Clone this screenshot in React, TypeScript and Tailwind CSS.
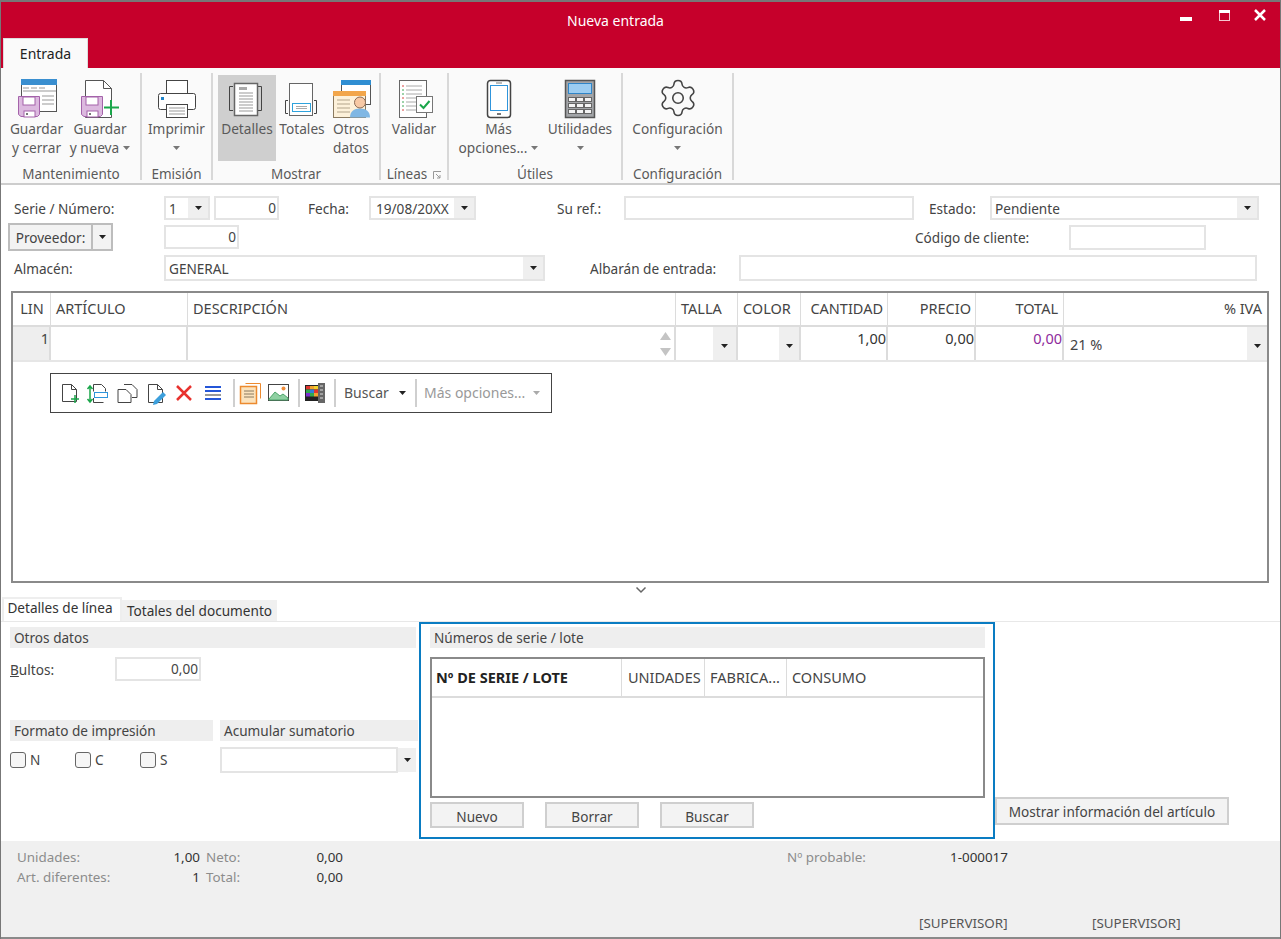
import { Settings } from "lucide-react";

const Caret = ({ color = "#222" }: { color?: string }) => (
  <svg width="7" height="4" viewBox="0 0 7 4" className="shrink-0">
    <path d="M0 0h7L3.5 4z" fill={color} />
  </svg>
);

const Floppy = ({ x, y }: { x: number; y: number }) => (
  <g transform={`translate(${x} ${y})`}>
    <path d="M.5.5h21v18l-2 2H3l-2.500-2z" fill="#dcb9df" stroke="#a463aa" />
    <rect x="5" y="1" width="12" height="8" fill="#fff" stroke="#a463aa" />
    <rect x="6" y="15" width="11" height="6" fill="#fff" stroke="#a463aa" />
    <rect x="8" y="17" width="2" height="2" fill="#777" />
  </g>
);

const IconGuardarCerrar = () => (
  <svg width="44" height="44" viewBox="0 0 44 44">
    <rect x="6.500" y="3.500" width="35" height="32" fill="#fff" stroke="#555" />
    <rect x="6" y="3" width="36" height="6" fill="#3a8fd0" />
    <path d="M8 12h6M16 12h6M24 12h6M8 15h33M27 20h12M27 24h12M27 28h12" stroke="#999" />
    <Floppy x={3} y={20} />
  </svg>
);

const IconGuardarNueva = () => (
  <svg width="44" height="44" viewBox="0 0 44 44">
    <path d="M7.500 4.500h18l8 8v29h-26z" fill="#fff" stroke="#555" />
    <path d="M25.500 4.500v8h8" fill="none" stroke="#555" />
    <Floppy x={3} y={20} />
    <path d="M33 24v15M26 31.500h15" stroke="#1aa64a" strokeWidth="2" />
  </svg>
);

const IconImprimir = () => (
  <svg width="44" height="44" viewBox="0 0 44 44">
    <rect x="11.500" y="4.500" width="21" height="14" fill="#fff" stroke="#444" />
    <rect x="3.500" y="17.500" width="37" height="16" rx="2" fill="#fff" stroke="#444" />
    <rect x="6" y="21" width="3" height="3" fill="#1f83c9" />
    <rect x="11.500" y="28.500" width="21" height="13" fill="#fff" stroke="#444" />
    <path d="M14 32h16M14 35h16M14 38h16" stroke="#999" />
  </svg>
);

const IconDetalles = () => (
  <svg width="44" height="44" viewBox="0 0 44 44">
    <path d="M8 10.500H4.500v24H8M33 10.500h3.500v24H33" fill="none" stroke="#444" />
    <rect x="9.500" y="7.500" width="23" height="32" fill="#fff" stroke="#666" strokeWidth="1.500" />
    <rect x="14" y="11" width="8" height="3" fill="#aaa" />
    <path d="M14 17h14M14 20h14M14 23h14M14 26h14M14 29h14M14 32h14M14 35h14" stroke="#999" />
  </svg>
);

const IconTotales = () => (
  <svg width="44" height="44" viewBox="0 0 44 44">
    <rect x="9.500" y="7.500" width="23" height="32" fill="#fff" stroke="#666" />
    <path d="M8 24.500H5.500v13H8M34 24.500h2.500v13H34" fill="none" stroke="#444" />
    <rect x="12.500" y="27.500" width="18" height="8" fill="#fff" stroke="#2ea3dd" />
    <path d="M16 30.500h11M16 32.500h11" stroke="#aaa" />
  </svg>
);

const IconOtros = () => (
  <svg width="44" height="44" viewBox="0 0 44 44">
    <rect x="12.500" y="4.500" width="29" height="24" fill="#fff" stroke="#555" />
    <rect x="12" y="4" width="30" height="5" fill="#2f8ed2" />
    <rect x="4.500" y="15.500" width="32" height="26" fill="#fdf1da" stroke="#8a7a60" />
    <rect x="4" y="15" width="33" height="5" fill="#f2a64b" />
    <path d="M8 24h13M8 28h13M8 32h13M8 36h13" stroke="#b3a58c" />
    <path d="M21 41.500c0-6 4-9 10-9s10 3 10 9z" fill="#7fb7e4" />
    <circle cx="31" cy="26.500" r="5.500" fill="#f8c9a5" stroke="#8a6a55" />
  </svg>
);

const IconValidar = () => (
  <svg width="44" height="44" viewBox="0 0 44 44">
    <rect x="7.500" y="4.500" width="27" height="37" fill="#fff" stroke="#666" />
    <path d="M14 10h16M14 14h16M14 18h16M14 22h16M14 26h10M14 30h10M14 34h10" stroke="#aaa" />
    <path d="M10 10h2M10 22h2M10 34h2" stroke="#d8433f" />
    <path d="M10 14h2M10 18h2M10 26h2M10 30h2" stroke="#3aa655" />
    <rect x="24.500" y="20.500" width="16" height="16" fill="#fff" stroke="#777" />
    <path d="M28 28.500l3.500 3.500 6-7" fill="none" stroke="#1aa64a" strokeWidth="2" />
  </svg>
);

const IconMovil = () => (
  <svg width="44" height="44" viewBox="0 0 44 44">
    <rect x="10.500" y="4.500" width="23" height="37" rx="3" fill="#fff" stroke="#444" strokeWidth="1.500" />
    <rect x="13.500" y="9.500" width="17" height="25" fill="#fff" stroke="#2f95dc" />
    <path d="M19 7h6" stroke="#777" />
    <rect x="20" y="37" width="4" height="2" fill="#777" />
  </svg>
);

const IconCalc = () => (
  <svg width="44" height="44" viewBox="0 0 44 44">
    <rect x="7.500" y="4.500" width="29" height="37" fill="#a3a5a8" stroke="#555" strokeWidth="1.500" />
    <rect x="10.500" y="7.500" width="23" height="10" fill="#9bcdf2" stroke="#2f85c8" />
    {[21, 27, 33].map((y) =>
      [10.5, 18.5, 26.5].map((x) => (
        <rect key={`${x}-${y}`} x={x} y={y + 0.5} width="7" height="4" fill="#f4f4f4" stroke="#666" />
      )),
    )}
  </svg>
);

const RibbonBtn = ({
  icon,
  lines,
  w,
  caret,
  active,
}: {
  icon: React.ReactNode;
  lines: string[];
  w: string;
  caret?: "inline" | "below";
  active?: boolean;
}) => (
  <div className={`flex flex-col items-center h-[86px] shrink-0 ${w} ${active ? "bg-[#cfcfcf]" : ""}`}>
    <div className="h-[44px] mt-[1px] mb-[-1px] flex items-center justify-center">{icon}</div>
    <div className="h-[19px] leading-[19px] whitespace-nowrap">{lines[0]}</div>
    <div className="h-[19px] leading-[19px] whitespace-nowrap flex items-center gap-[4px]">
      {lines[1]}
      {caret && <Caret color="#777" />}
    </div>
  </div>
);

const RibbonGroup = ({
  w,
  label,
  children,
  dialog,
  pad,
}: {
  w: string;
  label: string;
  children: React.ReactNode;
  dialog?: boolean;
  pad?: string;
}) => (
  <div className={`shrink-0 h-[107px] mt-[5px] flex flex-col border-r-2 border-[#d8d8d8] ${w}`}>
    <div className={`flex mt-[2px] h-[86px] text-[13.700px] ${pad ?? "justify-center"}`}>{children}</div>
    <div className={`mt-[5px] h-[17px] leading-[17px] text-center relative text-[13.500px] ${dialog ? "pr-[14px]" : ""}`}>
      {label}
      {dialog && (
        <svg width="9" height="9" viewBox="0 0 9 9" className="absolute right-[5px] top-[5px]">
          <path d="M.5 8V.5H8M3 3l4 4M7 4v3H4" fill="none" stroke="#999" />
        </svg>
      )}
    </div>
  </div>
);

const Field = ({ w, h = "h-[24px]", right, children }: { w: string; h?: string; right?: boolean; children?: React.ReactNode }) => (
  <div className={`shrink-0 bg-white border-2 border-[#e4e4e4] pl-[3px] pr-[1px] flex items-center ${w} ${h} ${right ? "justify-end" : ""}`}>
    {children}
  </div>
);

const Select = ({ w, h = "h-[24px]", arrow = "w-[20px]", children }: { w: string; h?: string; arrow?: string; children?: React.ReactNode }) => (
  <div className={`shrink-0 bg-white border-2 border-[#e4e4e4] flex items-stretch ${w} ${h}`}>
    <div className="flex-1 px-[3px] pt-[2px] flex items-center whitespace-nowrap overflow-hidden">{children}</div>
    <div className={`bg-[#efefef] flex items-center justify-center ${arrow}`}>
      <Caret />
    </div>
  </div>
);

const Label = ({ w, children }: { w: string; children: React.ReactNode }) => (
  <div className={`shrink-0 whitespace-nowrap pt-[2px] ${w}`}>{children}</div>
);

const SectionBar = ({ w, pad = "pl-[4px]", children }: { w: string; pad?: string; children: React.ReactNode }) => (
  <div className={`h-[21px] leading-[21px] bg-[#eeeeee] whitespace-nowrap ${pad} ${w}`}>{children}</div>
);

const Check = ({ label, w }: { label: string; w: string }) => (
  <div className={`flex items-center gap-[4px] ${w}`}>
    <div className="w-[16px] h-[16px] rounded-[3px] border border-[#666] bg-[#f6f6f6]" />
    {label}
  </div>
);

const PushBtn = ({ w, h = "h-[26px]", pt = "pt-[4px]", children }: { w: string; h?: string; pt?: string; children: React.ReactNode }) => (
  <div className={`shrink-0 flex items-center justify-center bg-[#f3f3f3] border-2 border-[#cfcfcf] whitespace-nowrap ${pt} ${w} ${h}`}>
    {children}
  </div>
);

const ToolSep = () => <div className="w-[2px] h-[28px] bg-[#cfcfcf] shrink-0" />;

const Toolbar = () => (
  <div className="absolute left-[37px] top-[80px] w-[502px] h-[40px] bg-white border border-[#444] flex items-center whitespace-nowrap text-[14px]">
    <svg width="168" height="24" viewBox="0 0 168 24" className="ml-[8px] shrink-0">
      {/* nuevo */}
      <path d="M3.500 3.500h9l5 5v12h-14z" fill="#fff" stroke="#444" />
      <path d="M12.500 3.500v5h5" fill="none" stroke="#444" />
      <path d="M16 14v8M12 18h8" stroke="#1aa64a" strokeWidth="1.500" />
      {/* insertar */}
      <path d="M34.500 3.500h8l4 4v3M34.500 3.500v7M34.500 17v4.500h10" fill="none" stroke="#444" />
      <path d="M31 6v14M28.500 8L31 5l2.500 3M28.500 18L31 21l2.500-3" fill="none" stroke="#1aa64a" strokeWidth="1.500" />
      <rect x="35.500" y="11.500" width="13" height="5" fill="#fff" stroke="#2f95dc" />
      {/* duplicar */}
      <path d="M65 3.500h8l5 5v8h-5" fill="#fff" stroke="#444" />
      <path d="M59 8.500h8l5 5v8H59z" fill="#fff" stroke="#444" />
      {/* editar */}
      <path d="M89.500 3.500h9l5 5v13h-14z" fill="#fff" stroke="#444" />
      <path d="M98.500 3.500v5h5" fill="none" stroke="#444" />
      <path d="M95 20l9-9 3 3-9 9-4 1z" fill="#3c9fdc" />
      {/* borrar */}
      <path d="M118 5l14 14M132 5l-14 14" stroke="#e8322e" strokeWidth="2.500" />
      {/* lista */}
      <path d="M146 6h16M146 18h16" stroke="#2456d8" strokeWidth="2" />
      <path d="M146 10h16" stroke="#2456d8" strokeWidth="2" />
      <path d="M146 14h16" stroke="#999" strokeWidth="2" />
    </svg>
    <div className="ml-[6px]"><ToolSep /></div>
    <svg width="59" height="24" viewBox="0 0 59 24" className="ml-[4px] shrink-0">
      <path d="M6.500 2.500h15v15" fill="none" stroke="#ec8a2f" />
      <rect x="1.500" y="5.500" width="16" height="17" fill="#fbe3bd" stroke="#ec8a2f" strokeWidth="1.500" />
      <path d="M5 10h10M5 13h10M5 16h10" stroke="#8a7a60" />
      <rect x="29.500" y="3.500" width="20" height="16" fill="#fff" stroke="#444" />
      <path d="M30 18l6-7 5 4 3-2 5 4v2H30z" fill="#8fd0a2" stroke="#4da56a" />
      <circle cx="44.500" cy="7.500" r="2" fill="#ef8d3a" />
    </svg>
    <ToolSep />
    <svg width="24" height="24" viewBox="0 0 24 24" className="ml-[4px] shrink-0">
      <rect x="1" y="4" width="13" height="16" fill="#222" />
      <rect x="2" y="5" width="4" height="3.500" fill="#e0352f" />
      <rect x="6" y="5" width="4" height="3.500" fill="#f2a32e" />
      <rect x="10" y="5" width="4" height="3.500" fill="#f2d22e" />
      <rect x="2" y="8.500" width="4" height="3.500" fill="#2fa84f" />
      <rect x="6" y="8.500" width="4" height="3.500" fill="#2f7fd8" />
      <rect x="10" y="8.500" width="4" height="3.500" fill="#e0352f" />
      <rect x="2" y="12" width="4" height="3.500" fill="#7a2fd0" />
      <rect x="6" y="12" width="4" height="3.500" fill="#2fa84f" />
      <rect x="10" y="12" width="4" height="3.500" fill="#f2a32e" />
      <rect x="14" y="2" width="7" height="20" fill="#666" />
      <path d="M16 5h3M16 9h3M16 13h3M16 17h3" stroke="#ddd" />
    </svg>
    <div className="ml-[6px]"><ToolSep /></div>
    <span className="ml-[8px] w-[55px] text-[#555] pb-[2px]">Buscar</span>
    <Caret />
    <div className="ml-[9px]"><ToolSep /></div>
    <span className="ml-[7px] w-[109px] text-[#999] pb-[2px]">Más opciones...</span>
    <Caret color="#aaa" />
  </div>
);

export default function App() {
  return (
    <div className="w-[1281px] h-[939px] overflow-hidden flex flex-col bg-white border-x border-[#777] font-['Noto_Sans',sans-serif] text-[13.600px] text-[#444]">
      {/* barra de título */}
      <div className="h-[68px] shrink-0 bg-[#c6002b] border-t-2 border-[#777] flex flex-col">
        <div className="h-[36px] relative flex items-center justify-center text-white text-[14px] pr-[50px]">
          Nueva entrada
          <div className="absolute right-[10px] top-0 flex items-start">
            <svg width="90" height="24" viewBox="0 0 90 24">
              <rect x="0" y="15" width="12" height="4" fill="#fff" />
              <rect x="39.500" y="8.500" width="10" height="10" fill="none" stroke="#f6c6d0" />
              <rect x="39" y="8" width="11" height="3" fill="#fff" />
              <path d="M75 8l10 10M85 8L75 18" stroke="#fff" strokeWidth="2.500" />
            </svg>
          </div>
        </div>
        <div className="h-[30px] pl-[2px]">
          <div className="w-[85px] h-[30px] bg-[#fafafa] border-t border-x border-[#ddd] flex items-center justify-center text-[#222] text-[14px]">
            Entrada
          </div>
        </div>
      </div>

      {/* cinta */}
      <div className="h-[117px] shrink-0 bg-[#fafafa] border-b-2 border-[#cdcdcd] flex pl-[1px] text-[#5a5a5a]">
        <RibbonGroup w="w-[140px]" label="Mantenimiento" pad="pl-[5px]">
          <RibbonBtn w="w-[59px]" icon={<IconGuardarCerrar />} lines={["Guardar", "y cerrar"]} />
          <RibbonBtn w="w-[68px]" icon={<IconGuardarNueva />} lines={["Guardar", "y nueva"]} caret="inline" />
        </RibbonGroup>
        <RibbonGroup w="w-[71px]" label="Emisión">
          <RibbonBtn w="w-[68px]" icon={<IconImprimir />} lines={["Imprimir", ""]} caret="below" />
        </RibbonGroup>
        <RibbonGroup w="w-[168px]" label="Mostrar" pad="pl-[5px]">
          <RibbonBtn w="w-[58px]" active icon={<IconDetalles />} lines={["Detalles", ""]} />
          <RibbonBtn w="w-[52px]" icon={<IconTotales />} lines={["Totales", ""]} />
          <RibbonBtn w="w-[46px]" icon={<IconOtros />} lines={["Otros", "datos"]} />
        </RibbonGroup>
        <RibbonGroup w="w-[68px]" label="Líneas" dialog>
          <RibbonBtn w="w-[60px]" icon={<IconValidar />} lines={["Validar", ""]} />
        </RibbonGroup>
        <RibbonGroup w="w-[174px]" label="Útiles" pad="pl-[2px]">
          <RibbonBtn w="w-[95px]" icon={<IconMovil />} lines={["Más", "opciones..."]} caret="inline" />
          <RibbonBtn w="w-[68px]" icon={<IconCalc />} lines={["Utilidades", ""]} caret="below" />
        </RibbonGroup>
        <RibbonGroup w="w-[111px]" label="Configuración">
          <RibbonBtn
            w="w-[100px]"
            icon={<Settings size={42} strokeWidth={0.9} color="#444" />}
            lines={["Configuración", ""]}
            caret="below"
          />
        </RibbonGroup>
      </div>

      {/* cabecera del documento */}
      <div className="flex items-center h-[24px] mt-[11px] pl-[13px] shrink-0">
        <Label w="w-[150px]">Serie / Número:</Label>
        <Select w="w-[46px]">1</Select>
        <div className="ml-[4px]"><Field w="w-[65px]" right>0</Field></div>
        <div className="ml-[29px]"><Label w="w-[61px]">Fecha:</Label></div>
        <Select w="w-[107px]"><span className="ml-[2px]">19/08/20XX</span></Select>
        <div className="ml-[81px]"><Label w="w-[67px]">Su ref.:</Label></div>
        <Field w="w-[290px]" />
        <div className="ml-[15px]"><Label w="w-[61px]">Estado:</Label></div>
        <Select w="w-[269px]">Pendiente</Select>
      </div>
      <div className="flex items-center h-[28px] mt-[3px] pl-[7px] shrink-0">
        <div className="w-[105px] h-[28px] flex bg-[#f3f3f3] border-2 border-[#bdbdbd]">
          <div className="w-[83px] pt-[2px] flex items-center justify-center border-r-2 border-[#bdbdbd]">Proveedor:</div>
          <div className="flex-1 flex items-center justify-center"><Caret /></div>
        </div>
        <div className="ml-[51px]"><Field w="w-[75px]" h="h-[24px]" right>0</Field></div>
        <div className="ml-[676px]"><Label w="w-[154px]">Código de cliente:</Label></div>
        <Field w="w-[137px]" h="h-[25px]" />
      </div>
      <div className="flex items-center h-[26px] mt-[4px] pl-[13px] shrink-0">
        <Label w="w-[150px]">Almacén:</Label>
        <Select w="w-[381px]" h="h-[26px]">GENERAL</Select>
        <div className="ml-[45px]"><Label w="w-[149px]">Albarán de entrada:</Label></div>
        <Field w="w-[518px]" h="h-[26px]" />
      </div>

      {/* líneas */}
      <div className="relative ml-[10px] mt-[10px] w-[1258px] h-[292px] shrink-0 border-2 border-[#8a8a8a] text-[14.500px]">
        <div className="grid grid-cols-[38px_137px_488px_62px_63px_87px_88px_88px_1fr] h-[34px] border-b-2 border-[#dcdcdc] items-stretch">
          <div className="flex items-center justify-center border-r border-[#dcdcdc] pl-[1px]">LIN</div>
          <div className="flex items-center px-[5px] border-r border-[#dcdcdc]">ARTÍCULO</div>
          <div className="flex items-center px-[5px] border-r border-[#dcdcdc]">DESCRIPCIÓN</div>
          <div className="flex items-center px-[5px] border-r border-[#dcdcdc]">TALLA</div>
          <div className="flex items-center px-[5px] border-r border-[#dcdcdc] whitespace-nowrap">COLOR</div>
          <div className="flex items-center justify-end px-[4px] border-r border-[#dcdcdc]">CANTIDAD</div>
          <div className="flex items-center justify-end px-[4px] border-r border-[#dcdcdc]">PRECIO</div>
          <div className="flex items-center justify-end px-[5px] border-r border-[#dcdcdc]">TOTAL</div>
          <div className="flex items-center justify-end px-[5px]">% IVA</div>
        </div>
        <div className="grid grid-cols-[38px_137px_488px_62px_63px_87px_88px_88px_1fr] h-[35px] border-b-2 border-[#e6e6e6]">
          <div className="bg-[#eeeeee] text-right border-r-2 border-[#dcdcdc] pt-[1px]">1</div>
          <div className="border-r-2 border-[#dcdcdc]" />
          <div className="border-r-2 border-[#dcdcdc] flex justify-end items-center pr-[3px]">
            <svg width="11" height="26" viewBox="0 0 11 26">
              <path d="M5.500 1L11 9H0z" fill="#c4c4c4" />
              <path d="M5.500 25L11 17H0z" fill="#c4c4c4" />
            </svg>
          </div>
          <div className="border-r-2 border-[#dcdcdc] flex justify-end">
            <div className="w-[23px] bg-[#efefef] flex items-center justify-center pt-[4px]"><Caret /></div>
          </div>
          <div className="border-r-2 border-[#dcdcdc] flex justify-end">
            <div className="w-[20px] bg-[#efefef] flex items-center justify-center pt-[4px]"><Caret /></div>
          </div>
          <div className="border-r-2 border-[#dcdcdc] text-right text-[#333] pt-[1px]">1,00</div>
          <div className="border-r-2 border-[#dcdcdc] text-right text-[#333] pt-[1px]">0,00</div>
          <div className="border-r-2 border-[#dcdcdc] text-right text-[#8e2a9c] pt-[1px]">0,00</div>
          <div className="flex">
            <div className="flex-1 pl-[6px] pt-[7px]">21 %</div>
            <div className="w-[20px] bg-[#efefef] flex items-center justify-center pt-[4px]"><Caret /></div>
          </div>
        </div>
        <Toolbar />
      </div>

      {/* separador */}
      <div className="h-[14px] shrink-0 flex items-center justify-center pl-[1px]">
        <svg width="12" height="8" viewBox="0 0 12 8">
          <path d="M1.500 1.500L6 6l4.500-4.500" fill="none" stroke="#666" strokeWidth="1.500" />
        </svg>
      </div>

      {/* pestañas */}
      <div className="h-[24px] shrink-0 flex items-end pl-[1px]">
        <div className="w-[120px] h-[24px] flex items-center justify-center bg-white border-t-2 border-x-2 border-[#eeeeee] text-[#333] pb-[3px] pr-[4px]">
          Detalles de línea
        </div>
        <div className="w-[155px] h-[21px] flex items-center justify-center bg-[#f0f0f0] text-[#333] pt-[2px]">
          Totales del documento
        </div>
      </div>
      <div className="h-[1px] shrink-0 bg-[#e8e8e8]" />

      {/* panel inferior */}
      <div className="h-[219px] shrink-0 flex items-start">
        <div className="ml-[9px] w-[408px] pt-[5px] shrink-0">
          <SectionBar w="w-[406px]">Otros datos</SectionBar>
          <div className="flex items-center mt-[9px] h-[24px]">
            <Label w="w-[105px]"><span className="underline">B</span>ultos:</Label>
            <Field w="w-[86px]" right>0,00</Field>
          </div>
          <div className="flex mt-[39px]">
            <div className="w-[203px]">
              <SectionBar w="w-[203px]">Formato de impresión</SectionBar>
              <div className="flex mt-[10px] h-[18px]">
                <Check label="N" w="w-[65px]" />
                <Check label="C" w="w-[65px]" />
                <Check label="S" w="w-[65px]" />
              </div>
            </div>
            <div className="w-[198px] ml-[7px]">
              <SectionBar w="w-[198px]">Acumular sumatorio</SectionBar>
              <div className="mt-[6px] flex items-center">
                <Field w="w-[178px]" h="h-[26px]" />
                <div className="w-[18px] h-[24px] bg-[#efefef] flex items-center justify-center"><Caret /></div>
              </div>
            </div>
          </div>
        </div>

        <div className="ml-[1px] w-[576px] h-[217px] shrink-0 border-2 border-[#0a7cc2] pl-[9px] pt-[3px]">
          <SectionBar w="w-[555px]" pad="pl-[4px]">Números de serie / lote</SectionBar>
          <div className="mt-[9px] w-[555px] h-[141px] border-2 border-[#8a8a8a] text-[14.500px]">
            <div className="grid grid-cols-[190px_83px_82px_1fr] h-[39px] border-b-2 border-[#dcdcdc]">
              <div className="flex items-center px-[4px] font-bold text-[#222] border-r border-[#dcdcdc] whitespace-nowrap">Nº DE SERIE / LOTE</div>
              <div className="flex items-center px-[6px] border-r border-[#dcdcdc]">UNIDADES</div>
              <div className="flex items-center px-[5px] border-r border-[#dcdcdc] whitespace-nowrap">FABRICA...</div>
              <div className="flex items-center px-[5px]">CONSUMO</div>
            </div>
          </div>
          <div className="flex gap-[21px] mt-[4px]">
            <PushBtn w="w-[94px]">Nuevo</PushBtn>
            <PushBtn w="w-[94px]">Borrar</PushBtn>
            <PushBtn w="w-[94px]">Buscar</PushBtn>
          </div>
        </div>

        <div className="mt-[175px]">
          <PushBtn w="w-[234px]" h="h-[28px]" pt="pt-[2px]">Mostrar información del artículo</PushBtn>
        </div>
      </div>

      {/* pie */}
      <div className="flex-1 bg-[#f0f0f0] border-b-2 border-[#8a8a8a] flex flex-col text-[#333] text-[13.400px]">
        <div className="flex h-[20px] mt-[6px] pl-[16px] items-center">
          <span className="w-[123px] text-[#8c8c8c]">Unidades:</span>
          <span className="w-[60px] text-right">1,00</span>
          <span className="w-[90px] ml-[6px] text-[#8c8c8c]">Neto:</span>
          <span className="w-[47px] text-right">0,00</span>
          <span className="w-[163px] ml-[444px] text-[#8c8c8c]">Nº probable:</span>
          <span>1-000017</span>
        </div>
        <div className="flex h-[20px] pl-[16px] items-center">
          <span className="w-[123px] text-[#8c8c8c]">Art. diferentes:</span>
          <span className="w-[60px] text-right">1</span>
          <span className="w-[90px] ml-[6px] text-[#8c8c8c]">Total:</span>
          <span className="w-[47px] text-right">0,00</span>
        </div>
        <div className="mt-auto mb-[4px] flex pl-[918px] text-[#555]">
          <span className="w-[173px]">[SUPERVISOR]</span>
          <span>[SUPERVISOR]</span>
        </div>
      </div>
    </div>
  );
}
